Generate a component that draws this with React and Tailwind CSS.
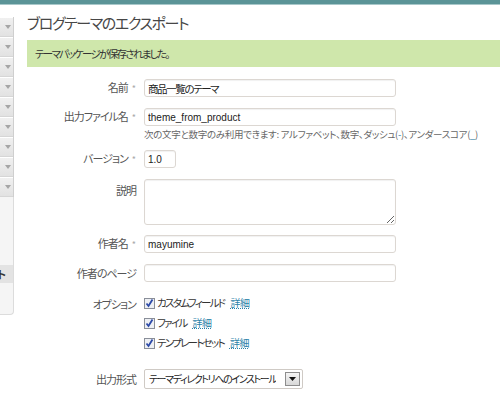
import React from 'react';

const jp = 'font-["Noto_Sans_CJK_JP","Liberation_Sans",sans-serif] [font-feature-settings:"palt"]';

const Req = () => <span className="ml-[4px] text-[9px] tracking-normal text-[#aaa]">*</span>;

const Row = ({ label, req, top, className = '', children }) => (
  <div className={`flex ${top ? 'items-start' : 'items-center'} ${className}`}>
    <div className={`w-[109px] shrink-0 text-right text-[11px] leading-[14px] tracking-[-1px] text-[#555] ${top ? 'pt-[4px]' : ''}`}>
      {label}
      {req && <Req />}
    </div>
    <div className="ml-[8px] flex flex-col leading-none">{children}</div>
  </div>
);

const Input = ({ value, w = 'w-[252px]', mono }) => (
  <input
    readOnly
    value={value}
    className={`block ${w} h-[18px] rounded-[3px] border border-[#dcd7d2] bg-white px-[3px] leading-[16px] text-[#222] shadow-[inset_0_1px_1px_rgba(0,0,0,0.06)] outline-none ${
      mono ? "font-['Liberation_Sans',sans-serif] text-[10px]" : 'text-[10.5px] tracking-[-1.4px]'
    }`}
  />
);

const Check = ({ label }) => (
  <div className="flex h-[20px] items-center">
    <svg width="11" height="11" viewBox="0 0 11 11">
      <rect x="0.5" y="0.5" width="10" height="10" fill="#eef0f4" stroke="#8a8f99" />
      <path d="M2.5 5.5 L4.5 8 L8.5 1.5" fill="none" stroke="#2d4aa8" strokeWidth="1.8" />
    </svg>
    <span className="ml-[2px] text-[10.5px] leading-[14px] tracking-[-1.7px] text-[#333]">{label}</span>
    <a className="ml-[6px] text-[10px] leading-[14px] tracking-[-0.5px] text-[#2b82a8] underline decoration-dotted">詳細</a>
  </div>
);

const Sidebar = () => (
  <div className="mt-[12px] w-[14px] shrink-0">
    <div className="border-r border-[#cfcfcf]">
      {Array.from({ length: 9 }).map((_, i) => (
        <div
          key={i}
          className="flex h-[20px] items-center justify-center border-b border-[#d6d6d6] border-t border-t-white bg-gradient-to-b from-[#f0f0f0] to-[#e2e2e2] pl-[2px]"
        >
          <svg width="6" height="4" viewBox="0 0 6 4">
            <path d="M0 0 L6 0 L3 4 Z" fill="#a5a5a5" />
          </svg>
        </div>
      ))}
    </div>
    <div className="h-[118px] rounded-br-[4px] border-r border-b border-[#dcdcdc] bg-[#f5f5f5] pt-[68px]">
      <div className="flex h-[18px] items-center overflow-hidden bg-[#e3e3e3] text-[11px] leading-[14px] text-[#333]">
        <span className="-ml-[3px] font-bold">ト</span>
      </div>
    </div>
  </div>
);

export default function App() {
  return (
    <div className={`h-[414px] w-[500px] overflow-hidden bg-white ${jp}`}>
      <div className="h-[4px] bg-[#5b9497]" />
      <div className="h-[1px] bg-[#a8c8ca]" />
      <div className="flex">
        <Sidebar />
        <div className="min-w-0 flex-1 pl-[13px]">
          <h1 className="mt-[7px] h-[22px] text-[15px] leading-[22px] font-normal tracking-[-1.4px] text-[#474747]">
            ブログテーマのエクスポート
          </h1>
          <div className="mt-[6px] flex h-[27px] items-center bg-[#cfe7ab] pl-[8px] text-[10.5px] leading-[14px] tracking-[-1.7px] text-[#333]">
            テーマパッケージが保存されました。
          </div>

          <Row label="名前" req className="mt-[12px]">
            <Input value="商品一覧のテーマ" />
          </Row>
          <Row label="出力ファイル名" req className="mt-[11px]">
            <Input value="theme_from_product" mono />
          </Row>
          <div className="ml-[117px] mt-[2px] whitespace-nowrap text-[9.5px] leading-[12px] tracking-[-0.3px] text-[#666]">
            次の文字と数字のみ利用できます: アルファベット、数字、ダッシュ(<span className="text-[#2b82a8]">-</span>)、アンダースコア(<span className="text-[#2b82a8]">_</span>)
          </div>
          <Row label="バージョン" req className="mt-[10px]">
            <Input value="1.0" w="w-[32px]" mono />
          </Row>
          <Row label="説明" top className="mt-[11px]">
            <textarea
              readOnly
              className="block h-[46px] w-[252px] resize rounded-[3px] border border-[#dcd7d2] bg-white shadow-[inset_0_1px_1px_rgba(0,0,0,0.06)] outline-none"
            />
          </Row>
          <Row label="作者名" req className="mt-[10px]">
            <Input value="mayumine" mono />
          </Row>
          <Row label="作者のページ" className="mt-[11px]">
            <Input value="" />
          </Row>
          <Row label="オプション" top className="mt-[11px]">
            <Check label="カスタムフィールド" />
            <Check label="ファイル" />
            <Check label="テンプレートセット" />
          </Row>
          <Row label="出力形式" className="mt-[16px]">
            <div className="flex h-[20px] w-[159px] items-center justify-between rounded-[2px] border border-[#cfcac5] bg-white pl-[4px] pr-[2px]">
              <span className="min-w-0 overflow-hidden whitespace-nowrap text-[10px] leading-[14px] tracking-[-1.4px] text-[#222]">テーマディレクトリへのインストール</span>
              <div className="flex h-[14px] w-[15px] shrink-0 items-center justify-center border border-[#8d8d8d] bg-gradient-to-b from-[#f4f4f4] to-[#d8d8d8]">
                <svg width="7" height="4" viewBox="0 0 7 4">
                  <path d="M0 0 L7 0 L3.5 4 Z" fill="#111" />
                </svg>
              </div>
            </div>
          </Row>
        </div>
      </div>
    </div>
  );
}
